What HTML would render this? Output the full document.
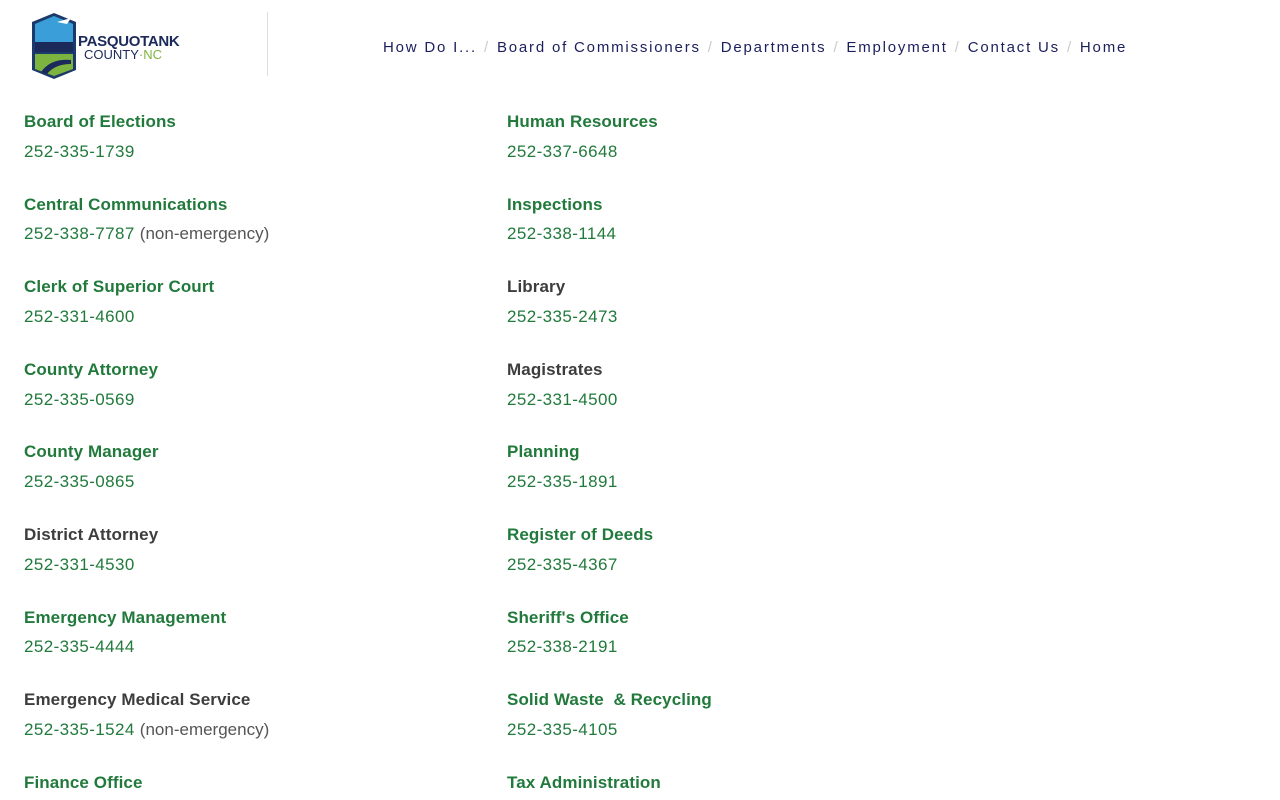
<!DOCTYPE html>
<html><head><meta charset="utf-8"><style>
body{margin:0;width:1280px;height:800px;overflow:hidden;background:#fff;font-family:"Liberation Sans",sans-serif;position:relative}
.nav{position:absolute;top:39px;left:383px;font-size:15px;letter-spacing:1.8px;color:#1b1f5c;white-space:nowrap}
.nav span.s{color:#ccc;margin:0 7px}
.t{position:absolute;font-size:17px;font-weight:bold;color:#217a3c;white-space:nowrap;letter-spacing:0.1px;margin-top:1px}
.t.d{color:#3d3d3d}
.p{position:absolute;font-size:17px;color:#217a3c;white-space:nowrap;letter-spacing:0.4px;margin-top:1px}
.p i{font-style:normal;color:#555;letter-spacing:0}
</style></head><body>
<svg style="position:absolute;left:31px;top:12px" width="46" height="68" viewBox="0 0 46 68">
<path d="M23 1 L45 10 L45 58 L23 67 L1 58 L1 10 Z" fill="#1b3a6b"/>
<path d="M4 12 L23 4 L42 12 L42 30 L4 30 Z" fill="#3a9fd8"/>
<path d="M4 30 L42 30 L42 40 L4 40Z" fill="#1b2a5a"/>
<path d="M4 42 L42 42 L42 57 L23 64 L4 57Z" fill="#7db43f"/>
<path d="M10 60 Q20 46 40 48 L40 52 Q24 52 16 62Z" fill="#1b2a5a"/>
<path d="M26 10 L40 6 L36 12Z" fill="#fff"/>
</svg>
<div style="position:absolute;left:78px;top:33px;font-size:15px;font-weight:bold;color:#1b2a5a;letter-spacing:-0.3px">PASQUOTANK</div>
<div style="position:absolute;left:84px;top:47px;font-size:13px;color:#1b2a5a">COUNTY<span style="color:#7db43f">·NC</span></div>
<div style="position:absolute;left:267px;top:12px;width:1px;height:64px;background:#ddd"></div>
<div class="nav">How Do I...<span class="s">/</span>Board of Commissioners<span class="s">/</span>Departments<span class="s">/</span>Employment<span class="s">/</span>Contact Us<span class="s">/</span>Home</div>

<div class="t" style="left:24px;top:111px">Board of Elections</div><div class="p" style="left:24px;top:141px">252-335-1739</div>
<div class="t" style="left:24px;top:194px">Central Communications</div><div class="p" style="left:24px;top:223px">252-338-7787 <i>(non-emergency)</i></div>
<div class="t" style="left:24px;top:276px">Clerk of Superior Court</div><div class="p" style="left:24px;top:306px">252-331-4600</div>
<div class="t" style="left:24px;top:359px">County Attorney</div><div class="p" style="left:24px;top:389px">252-335-0569</div>
<div class="t" style="left:24px;top:441px">County Manager</div><div class="p" style="left:24px;top:471px">252-335-0865</div>
<div class="t d" style="left:24px;top:524px">District Attorney</div><div class="p" style="left:24px;top:554px">252-331-4530</div>
<div class="t" style="left:24px;top:607px">Emergency Management</div><div class="p" style="left:24px;top:636px">252-335-4444</div>
<div class="t d" style="left:24px;top:689px">Emergency Medical Service</div><div class="p" style="left:24px;top:719px">252-335-1524 <i>(non-emergency)</i></div>
<div class="t" style="left:24px;top:772px">Finance Office</div>

<div class="t" style="left:507px;top:111px">Human Resources</div><div class="p" style="left:507px;top:141px">252-337-6648</div>
<div class="t" style="left:507px;top:194px">Inspections</div><div class="p" style="left:507px;top:223px">252-338-1144</div>
<div class="t d" style="left:507px;top:276px">Library</div><div class="p" style="left:507px;top:306px">252-335-2473</div>
<div class="t d" style="left:507px;top:359px">Magistrates</div><div class="p" style="left:507px;top:389px">252-331-4500</div>
<div class="t" style="left:507px;top:441px">Planning</div><div class="p" style="left:507px;top:471px">252-335-1891</div>
<div class="t" style="left:507px;top:524px">Register of Deeds</div><div class="p" style="left:507px;top:554px">252-335-4367</div>
<div class="t" style="left:507px;top:607px">Sheriff's Office</div><div class="p" style="left:507px;top:636px">252-338-2191</div>
<div class="t" style="left:507px;top:689px">Solid Waste&nbsp; &amp; Recycling</div><div class="p" style="left:507px;top:719px">252-335-4105</div>
<div class="t" style="left:507px;top:772px">Tax Administration</div>
</body></html>
